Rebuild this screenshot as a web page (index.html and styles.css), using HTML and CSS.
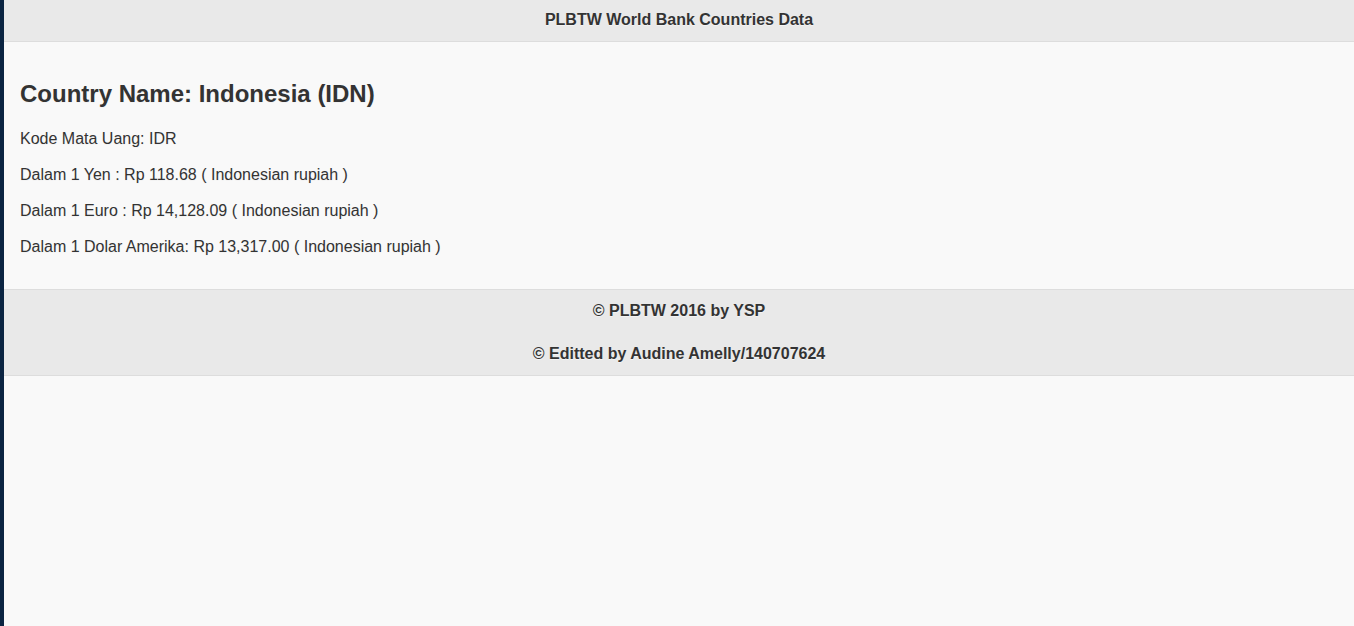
FILE: index.html
```html
<!DOCTYPE html>
<html>
<head>
<meta charset="utf-8">
<title>PLBTW World Bank Countries Data</title>
<link rel="stylesheet" href="styles.css">
</head>
<body>
<div class="page">
  <header class="bar header">
    <h1 class="bar-title">PLBTW World Bank Countries Data</h1>
  </header>
  <main class="content">
    <h2 class="country">Country Name: Indonesia (IDN)</h2>
    <p class="line">Kode Mata Uang: IDR</p>
    <p class="line">Dalam 1 Yen : Rp 118.68 ( Indonesian rupiah )</p>
    <p class="line">Dalam 1 Euro : Rp 14,128.09 ( Indonesian rupiah )</p>
    <p class="line">Dalam 1 Dolar Amerika: Rp 13,317.00 ( Indonesian rupiah )</p>
  </main>
  <footer class="bar footer">
    <h4 class="bar-title foot-title">© PLBTW 2016 by YSP</h4>
    <h4 class="bar-title foot-title">© Editted by Audine Amelly/140707624</h4>
  </footer>
</div>
</body>
</html>
```
FILE: styles.css
```css
html, body {
  margin: 0;
  padding: 0;
  height: 100%;
}
body {
  background: #f9f9f9;
  font-family: "Liberation Sans", Arial, sans-serif;
  font-size: 16px;
  line-height: 1.3;
  color: #333;
  text-shadow: 0 1px 0 #f3f3f3;
  border-left: 4px solid #0b2442;
  box-sizing: border-box;
  min-height: 626px;
}
.page {
  display: flex;
  flex-direction: column;
}
.bar {
  background: #e9e9e9;
  border-color: #dddddd;
  border-style: solid;
  border-width: 0;
}
.header {
  border-bottom-width: 1px;
}
.footer {
  border-top-width: 1px;
  border-bottom-width: 1px;
}
.bar-title {
  margin: 0 30%;
  padding: 10px 0 12px;
  font-size: 16px;
  line-height: 19px;
  font-weight: bold;
  text-align: center;
  white-space: nowrap;
}
.foot-title {
  padding: 10px 0 11px;
  line-height: 22px;
}
.foot-title:last-child {
  padding-bottom: 10px;
}
.content {
  padding: 16px;
}
.country {
  margin: 20px 0 20px;
  font-size: 24px;
  line-height: 31px;
  font-weight: bold;
}
.line {
  margin: 16px 0;
  line-height: 20px;
}
.line:last-child {
  margin-bottom: 16px;
}
```
